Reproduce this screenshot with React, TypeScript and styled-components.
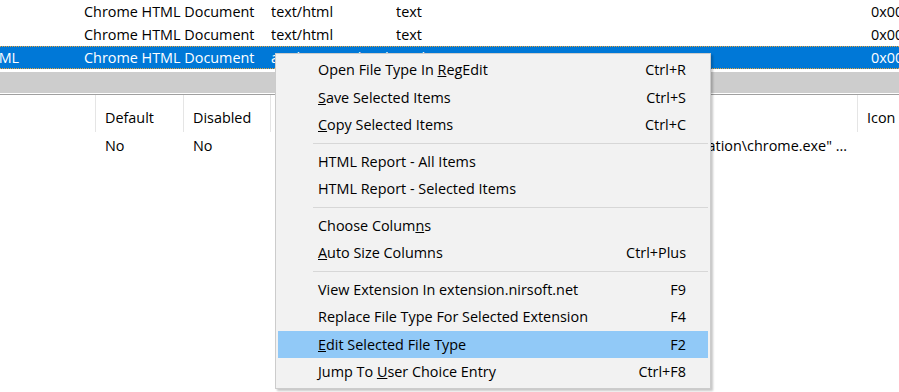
import { createGlobalStyle } from "styled-components";
import styled from "styled-components";

const GlobalStyle = createGlobalStyle`
    html, body {
        margin: 0;
        padding: 0;
        background: #ffffff;
        overflow: hidden;
    }
    body {
        font-family: "Open Sans", "Noto Sans", sans-serif;
        font-size: 14.4px;
        color: #000000;
    }
`;

const Page = styled.div`
    position: relative;
    width: 899px;
    height: 392px;
    overflow: hidden;
    background: #ffffff;
`;

const TopList = styled.div`
    display: flex;
    flex-direction: column;
    overflow: hidden;
    height: 72px;
`;

const TopRow = styled.div<{ $selected?: boolean }>`
    display: flex;
    height: 23px;
    align-items: center;
    margin-left: -38px;
    white-space: nowrap;
    color: ${(p) => (p.$selected ? "#ffffff" : "#000000")};
    background: ${(p) => (p.$selected ? "#0078d7" : "transparent")};
    border-top: 1px dotted ${(p) => (p.$selected ? "#e8a33c" : "transparent")};
    border-bottom: 1px dotted ${(p) => (p.$selected ? "#e8a33c" : "transparent")};
    box-sizing: border-box;
`;

const Cell = styled.div<{ $w: number; $pad?: number }>`
    flex: 0 0 ${(p) => p.$w}px;
    width: ${(p) => p.$w}px;
    padding-left: ${(p) => p.$pad ?? 0}px;
    box-sizing: border-box;
    overflow: hidden;
    white-space: nowrap;
`;

const Splitter = styled.div`
    height: 21px;
    background: #cdcdcd;
    border-bottom: 1px solid #ffffff;
`;

const SplitLine = styled.div`
    height: 1px;
    background: #a0a0a0;
`;

const Header = styled.div`
    display: flex;
    height: 37px;
    box-sizing: border-box;
    white-space: nowrap;
`;

const HeadCell = styled.div<{ $w: number }>`
    flex: 0 0 ${(p) => p.$w}px;
    display: flex;
    align-items: center;
    padding: 8px 0 0 9px;
    box-sizing: border-box;
    border-right: 1px solid #e5e5e5;
    overflow: hidden;
`;

const DataRow = styled.div`
    display: flex;
    height: 27px;
    align-items: center;
    white-space: nowrap;
`;

const DataCell = styled.div<{ $w: number; $right?: boolean }>`
    flex: 0 0 ${(p) => p.$w}px;
    padding-left: 9px;
    padding-right: ${(p) => (p.$right ? 11 : 0)}px;
    box-sizing: border-box;
    overflow: hidden;
    text-align: ${(p) => (p.$right ? "right" : "left")};
`;

const Menu = styled.div`
    position: absolute;
    left: 275px;
    top: 53px;
    width: 436px;
    box-sizing: border-box;
    padding: 2px;
    background: #f2f2f2;
    border: 1px solid #cccccc;
    box-shadow: 2px 2px 2px rgba(0, 0, 0, 0.22);
    display: flex;
    flex-direction: column;
`;

const MenuItem = styled.div<{ $active?: boolean }>`
    display: flex;
    align-items: center;
    justify-content: space-between;
    height: 27.5px;
    padding: 0 22px 0 40px;
    background: ${(p) => (p.$active ? "#91c9f7" : "transparent")};
    white-space: nowrap;
`;

const Shortcut = styled.span`
    text-align: right;
`;

const Separator = styled.div`
    height: 9px;
    display: flex;
    align-items: center;
    padding-left: 35px;
    &::after {
        content: "";
        flex: 1;
        height: 1px;
        background: #d7d7d7;
    }
`;

type Item = { label: React.ReactNode; key?: string; active?: boolean } | "sep";

const items: Item[] = [
    { label: <>Open File Type In <u>R</u>egEdit</>, key: "Ctrl+R" },
    { label: <><u>S</u>ave Selected Items</>, key: "Ctrl+S" },
    { label: <><u>C</u>opy Selected Items</>, key: "Ctrl+C" },
    "sep",
    { label: <>HTML Report - All Items</> },
    { label: <>HTML Report - Selected Items</> },
    "sep",
    { label: <>Choose Colum<u>n</u>s</> },
    { label: <><u>A</u>uto Size Columns</>, key: "Ctrl+Plus" },
    "sep",
    { label: <>View Extension In extension.nirsoft.net</>, key: "F9" },
    { label: <>Replace File Type For Selected Extension</>, key: "F4" },
    { label: <><u>E</u>dit Selected File Type</>, key: "F2", active: true },
    { label: <>Jump To <u>U</u>ser Choice Entry</>, key: "Ctrl+F8" },
];

const rows = [
    { ext: ".htm", name: "Chrome HTML Document", mime: "text/html", type: "text" },
    { ext: ".xht", name: "Chrome HTML Document", mime: "text/html", type: "text" },
    { ext: ".XHTML", name: "Chrome HTML Document", mime: "application/xhtml+xml", type: "application", selected: true },
];

export default function App() {
    return (
        <Page>
            <GlobalStyle />
            <TopList>
                {rows.map((r, i) => (
                    <TopRow key={i} $selected={r.selected}>
                        <Cell $w={122} $pad={6}>{r.ext}</Cell>
                        <Cell $w={187}>{r.name}</Cell>
                        <Cell $w={125}>{r.mime}</Cell>
                        <Cell $w={475}>{r.type}</Cell>
                        <Cell $w={60}>0x00000000</Cell>
                    </TopRow>
                ))}
            </TopList>
            <Splitter />
            <SplitLine />
            <Header>
                <HeadCell $w={96}></HeadCell>
                <HeadCell $w={88}>Default</HeadCell>
                <HeadCell $w={87}>Disabled</HeadCell>
                <HeadCell $w={587}>Command</HeadCell>
                <HeadCell $w={80}>Icon</HeadCell>
            </Header>
            <DataRow>
                <DataCell $w={96}></DataCell>
                <DataCell $w={88}>No</DataCell>
                <DataCell $w={87}>No</DataCell>
                <DataCell $w={587} $right>
                    "C:\Program Files\Google\Chrome\Application\chrome.exe" ...
                </DataCell>
                <DataCell $w={80}></DataCell>
            </DataRow>
            <Menu>
                {items.map((it, i) =>
                    it === "sep" ? (
                        <Separator key={i} />
                    ) : (
                        <MenuItem key={i} $active={it.active}>
                            <span>{it.label}</span>
                            {it.key && <Shortcut>{it.key}</Shortcut>}
                        </MenuItem>
                    )
                )}
            </Menu>
        </Page>
    );
}
